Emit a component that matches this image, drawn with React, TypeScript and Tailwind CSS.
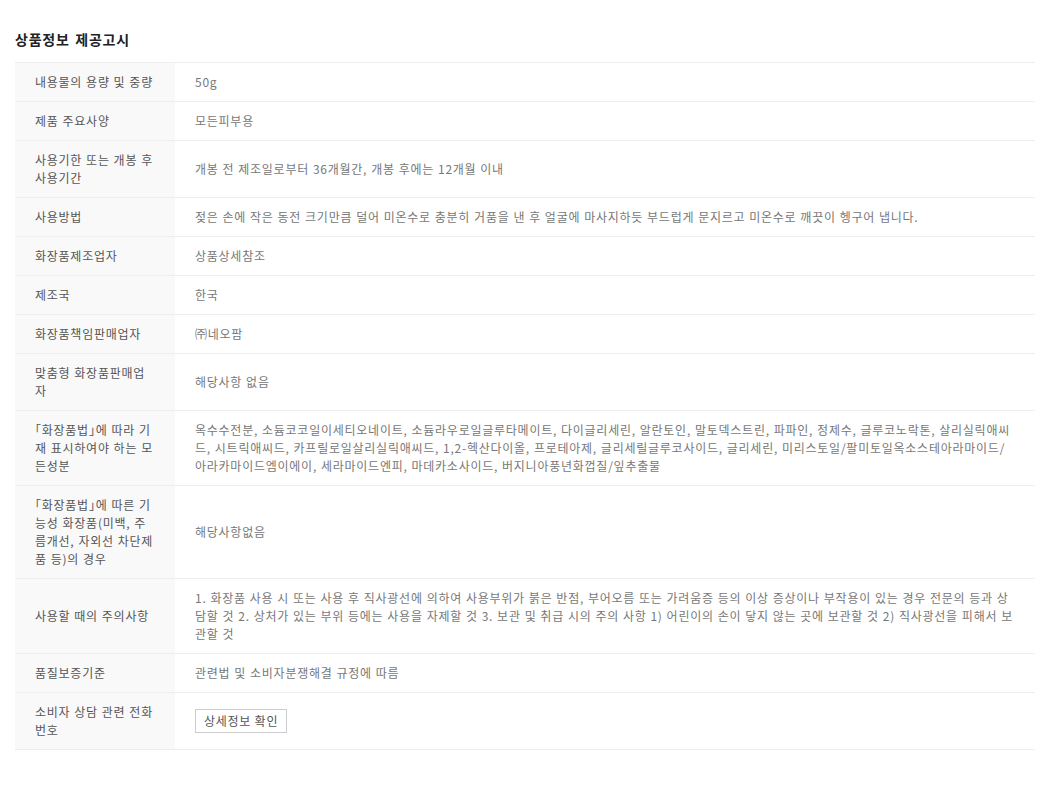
const rows: { label: string; value: React.ReactNode }[] = [
  { label: '내용물의 용량 및 중량', value: '50g' },
  { label: '제품 주요사양', value: '모든피부용' },
  { label: '사용기한 또는 개봉 후 사용기간', value: '개봉 전 제조일로부터 36개월간, 개봉 후에는 12개월 이내' },
  {
    label: '사용방법',
    value: '젖은 손에 작은 동전 크기만큼 덜어 미온수로 충분히 거품을 낸 후 얼굴에 마사지하듯 부드럽게 문지르고 미온수로 깨끗이 헹구어 냅니다.',
  },
  { label: '화장품제조업자', value: '상품상세참조' },
  { label: '제조국', value: '한국' },
  { label: '화장품책임판매업자', value: '㈜네오팜' },
  { label: '맞춤형 화장품판매업자', value: '해당사항 없음' },
  {
    label: '「화장품법」에 따라 기재 표시하여야 하는 모든성분',
    value:
      '옥수수전분, 소듐코코일이세티오네이트, 소듐라우로일글루타메이트, 다이글리세린, 알란토인, 말토덱스트린, 파파인, 정제수, 글루코노락톤, 살리실릭애씨드, 시트릭애씨드, 카프릴로일살리실릭애씨드, 1,2-헥산다이올, 프로테아제, 글리세릴글루코사이드, 글리세린, 미리스토일/팔미토일옥소스테아라마이드/아라카마이드엠이에이, 세라마이드엔피, 마데카소사이드, 버지니아풍년화껍질/잎추출물',
  },
  { label: '「화장품법」에 따른 기능성 화장품(미백, 주름개선, 자외선 차단제품 등)의 경우', value: '해당사항없음' },
  {
    label: '사용할 때의 주의사항',
    value:
      '1. 화장품 사용 시 또는 사용 후 직사광선에 의하여 사용부위가 붉은 반점, 부어오름 또는 가려움증 등의 이상 증상이나 부작용이 있는 경우 전문의 등과 상담할 것 2. 상처가 있는 부위 등에는 사용을 자제할 것 3. 보관 및 취급 시의 주의 사항 1) 어린이의 손이 닿지 않는 곳에 보관할 것 2) 직사광선을 피해서 보관할 것',
  },
  { label: '품질보증기준', value: '관련법 및 소비자분쟁해결 규정에 따름' },
  {
    label: '소비자 상담 관련 전화번호',
    value: (
      <button className="border border-[#cccccc] bg-white px-[8px] h-[24px] text-[12px] leading-[22px] text-[#555]">
        상세정보 확인
      </button>
    ),
  },
];

export default function App() {
  return (
    <div
      className="bg-white px-[15px] pt-[29px] pb-10 text-[12px] leading-[18px] tracking-[0.75px] [word-spacing:0.5px] [font-feature-settings:'halt']"
      style={{ fontFamily: '"Noto Sans CJK KR", "Liberation Sans", sans-serif' }}
    >
      {/* Title */}
      <h2 className="text-[14px] leading-[20px] font-bold text-[#222] mb-[13px] tracking-[0.8px] [word-spacing:1.5px]">
        상품정보 제공고시
      </h2>

      {/* Table */}
      <div className="w-[1020px] border-t border-[#eeeeee]">
        {rows.map((row) => (
          <div key={row.label} className="flex border-b border-[#eeeeee]">
            <div className="w-[160px] flex-shrink-0 bg-[#f9f9f9] px-5 py-[10px] flex items-center text-[#555] break-all">
              {row.label}
            </div>
            <div className="flex-1 px-5 py-[10px] flex items-center text-[#777] break-all">
              <div>{row.value}</div>
            </div>
          </div>
        ))}
      </div>
    </div>
  );
}
